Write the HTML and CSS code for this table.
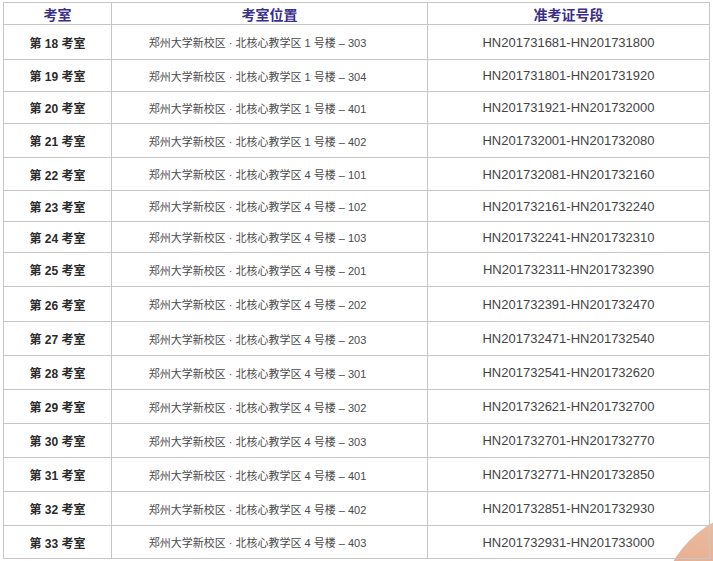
FILE: index.html
```html
<!DOCTYPE html>
<html lang="zh-CN">
<head>
<meta charset="utf-8">
<title>考室安排</title>
<link rel="stylesheet" href="styles.css">
</head>
<body>
<div class="page">
  <div class="deco"></div>
  <div class="grid">
    <div class="cell head">考室</div><div class="cell head">考室位置</div><div class="cell head">准考证号段</div>
    <div class="cell room">第 18 考室</div><div class="cell loc">郑州大学新校区 · 北核心教学区 1 号楼 – 303</div><div class="cell num">HN201731681-HN201731800</div>
    <div class="cell room">第 19 考室</div><div class="cell loc">郑州大学新校区 · 北核心教学区 1 号楼 – 304</div><div class="cell num">HN201731801-HN201731920</div>
    <div class="cell room">第 20 考室</div><div class="cell loc">郑州大学新校区 · 北核心教学区 1 号楼 – 401</div><div class="cell num">HN201731921-HN201732000</div>
    <div class="cell room">第 21 考室</div><div class="cell loc">郑州大学新校区 · 北核心教学区 1 号楼 – 402</div><div class="cell num">HN201732001-HN201732080</div>
    <div class="cell room">第 22 考室</div><div class="cell loc">郑州大学新校区 · 北核心教学区 4 号楼 – 101</div><div class="cell num">HN201732081-HN201732160</div>
    <div class="cell room">第 23 考室</div><div class="cell loc">郑州大学新校区 · 北核心教学区 4 号楼 – 102</div><div class="cell num">HN201732161-HN201732240</div>
    <div class="cell room">第 24 考室</div><div class="cell loc">郑州大学新校区 · 北核心教学区 4 号楼 – 103</div><div class="cell num">HN201732241-HN201732310</div>
    <div class="cell room">第 25 考室</div><div class="cell loc">郑州大学新校区 · 北核心教学区 4 号楼 – 201</div><div class="cell num">HN201732311-HN201732390</div>
    <div class="cell room">第 26 考室</div><div class="cell loc">郑州大学新校区 · 北核心教学区 4 号楼 – 202</div><div class="cell num">HN201732391-HN201732470</div>
    <div class="cell room">第 27 考室</div><div class="cell loc">郑州大学新校区 · 北核心教学区 4 号楼 – 203</div><div class="cell num">HN201732471-HN201732540</div>
    <div class="cell room">第 28 考室</div><div class="cell loc">郑州大学新校区 · 北核心教学区 4 号楼 – 301</div><div class="cell num">HN201732541-HN201732620</div>
    <div class="cell room">第 29 考室</div><div class="cell loc">郑州大学新校区 · 北核心教学区 4 号楼 – 302</div><div class="cell num">HN201732621-HN201732700</div>
    <div class="cell room">第 30 考室</div><div class="cell loc">郑州大学新校区 · 北核心教学区 4 号楼 – 303</div><div class="cell num">HN201732701-HN201732770</div>
    <div class="cell room">第 31 考室</div><div class="cell loc">郑州大学新校区 · 北核心教学区 4 号楼 – 401</div><div class="cell num">HN201732771-HN201732850</div>
    <div class="cell room">第 32 考室</div><div class="cell loc">郑州大学新校区 · 北核心教学区 4 号楼 – 402</div><div class="cell num">HN201732851-HN201732930</div>
    <div class="cell room">第 33 考室</div><div class="cell loc">郑州大学新校区 · 北核心教学区 4 号楼 – 403</div><div class="cell num">HN201732931-HN201733000</div>
  </div>
</div>
</body>
</html>
```

FILE: styles.css
```css
html, body {
  margin: 0;
  padding: 0;
  background: #ffffff;
}

.page {
  position: relative;
  width: 713px;
  height: 561px;
  overflow: hidden;
  padding: 2px 0 0 3px;
  box-sizing: border-box;
  font-family: "Liberation Sans", "Noto Sans CJK SC", sans-serif;
  isolation: isolate;
}

.deco {
  position: absolute;
  left: 660px;
  top: 510px;
  width: 204px;
  height: 204px;
  border-radius: 50%;
  background: linear-gradient(200deg, #f0cab2 0%, #e6ae90 45%, #dfa382 100%);
  z-index: -1;
}

.grid {
  display: grid;
  grid-template-columns: 108px 316px 282px;
  grid-template-rows: 22px 35px 32px 32px 34px 33px 31px 31px 34px 35px 34px 34px 34px 34px 34px 34px 33px;
  border-top: 1px solid #c6c6c6;
  border-left: 1px solid #c6c6c6;
  width: max-content;
}

.cell {
  box-sizing: border-box;
  border-right: 1px solid #c6c6c6;
  border-bottom: 1px solid #c6c6c6;
  display: flex;
  align-items: center;
  justify-content: center;
  white-space: nowrap;
}

.head {
  font-size: 14px;
  font-weight: 700;
  color: #3b2f8c;
}

.room {
  font-size: 12px;
  font-weight: 700;
  color: #2a2a2a;
}

.loc {
  font-size: 11px;
  color: #4a4a4a;
  padding-right: 24px;
}

.num {
  font-size: 13px;
  color: #444444;
}
```
